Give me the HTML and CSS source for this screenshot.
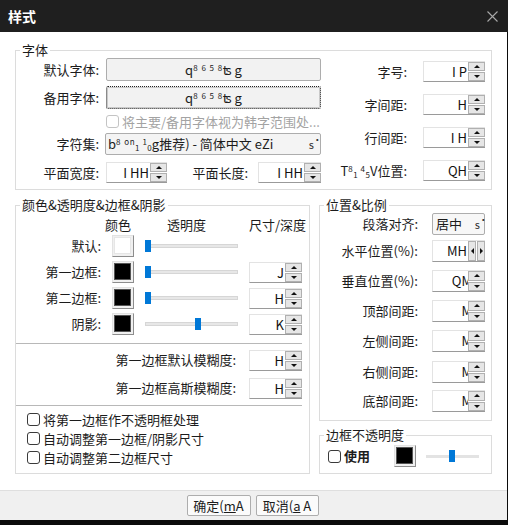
FILE: index.html
```html
<!DOCTYPE html>
<html lang="zh-CN">
<head>
<meta charset="utf-8">
<title>样式</title>
<link rel="stylesheet" href="styles.css">
</head>
<body>
<div class="window">
  <div class="titlebar">
    <span class="title">样式</span>
    <svg class="close" width="11" height="11" viewBox="0 0 11 11"><path d="M0.5 0.5 L10.5 10.5 M10.5 0.5 L0.5 10.5" stroke="#a8a8a8" stroke-width="1.1" fill="none"/></svg>
  </div>
  <div class="content">
    <fieldset class="group font-group">
      <legend>字体</legend>
      <div class="font-body">
        <div class="font-left">
          <div class="frow r1"><span class="lbl">默认字体:</span><button class="fontbtn">q<span class="sup">8 6 5 8</span><span class="ts">ts</span> g</button></div>
          <div class="frow r2"><span class="lbl">备用字体:</span><button class="fontbtn focused">q<span class="sup">8 6 5 8</span><span class="ts">ts</span> g</button></div>
          <div class="frow r3"><span class="lbl"></span><label class="chk disabled"><span class="box"></span>将主要/备用字体视为韩字范围处...</label></div>
          <div class="frow r4"><span class="lbl">字符集:</span><div class="combo charset"><span class="ctext">b<span class="sup">8 on</span><span class="sub">1</span> <span class="sup">1</span><span class="sub">0</span>g推荐) - 简体中文 eZi</span><span class="arrow">ṡ</span></div></div>
          <div class="frow r5"><span class="lbl">平面宽度:</span>
            <div class="sizes">
              <div class="spin w61"><span class="val">I HH</span><span class="btns"><i class="up"></i><i class="dn"></i></span></div>
              <span class="lbl2">平面长度:</span>
              <div class="spin w63"><span class="val">I HH</span><span class="btns"><i class="up"></i><i class="dn"></i></span></div>
            </div>
          </div>
        </div>
        <div class="font-right">
          <div class="prow"><span class="plbl">字号:</span><div class="spin w62"><span class="val">I P</span><span class="btns"><i class="up"></i><i class="dn"></i></span></div></div>
          <div class="prow"><span class="plbl">字间距:</span><div class="spin w62"><span class="val">H</span><span class="btns"><i class="up"></i><i class="dn"></i></span></div></div>
          <div class="prow"><span class="plbl">行间距:</span><div class="spin w62"><span class="val">I H</span><span class="btns"><i class="up"></i><i class="dn"></i></span></div></div>
          <div class="prow"><span class="plbl">T<span class="sup">8</span><span class="sub">1</span> <span class="sup">4</span><span class="sub">5</span>V位置:</span><div class="spin w62"><span class="val">QH</span><span class="btns"><i class="up"></i><i class="dn"></i></span></div></div>
        </div>
      </div>
    </fieldset>

    <div class="lower">
      <fieldset class="group colors">
        <legend>颜色&amp;透明度&amp;边框&amp;阴影</legend>
        <div class="colors-body">
          <div class="cgrid">
            <span></span><span class="hdr hdr-c">颜色</span><span class="hdr hdr-a">透明度</span><span class="hdr">尺寸/深度</span>

            <span class="clbl">默认:</span>
            <span class="swatch"><span class="fill white"></span></span>
            <span class="slider"><span class="track"></span><span class="thumb" style="left:0px"></span></span>
            <span></span>

            <span class="clbl">第一边框:</span>
            <span class="swatch"><span class="fill"></span></span>
            <span class="slider"><span class="track"></span><span class="thumb" style="left:0px"></span></span>
            <div class="spin"><span class="val">J</span><span class="btns"><i class="up"></i><i class="dn"></i></span></div>

            <span class="clbl">第二边框:</span>
            <span class="swatch"><span class="fill"></span></span>
            <span class="slider"><span class="track"></span><span class="thumb" style="left:0px"></span></span>
            <div class="spin"><span class="val">H</span><span class="btns"><i class="up"></i><i class="dn"></i></span></div>

            <span class="clbl">阴影:</span>
            <span class="swatch"><span class="fill"></span></span>
            <span class="slider"><span class="track"></span><span class="thumb" style="left:50px"></span></span>
            <div class="spin"><span class="val">K</span><span class="btns"><i class="up"></i><i class="dn"></i></span></div>
          </div>
          <div class="sep sep1"></div>
          <div class="blur">
            <span class="blbl">第一边框默认模糊度:</span>
            <div class="spin"><span class="val">H</span><span class="btns"><i class="up"></i><i class="dn"></i></span></div>
            <span class="blbl">第一边框高斯模糊度:</span>
            <div class="spin"><span class="val">H</span><span class="btns"><i class="up"></i><i class="dn"></i></span></div>
          </div>
          <div class="sep sep2"></div>
          <div class="checks">
            <label class="chk"><span class="box"></span>将第一边框作不透明框处理</label>
            <label class="chk"><span class="box"></span>自动调整第一边框/阴影尺寸</label>
            <label class="chk"><span class="box"></span>自动调整第二边框尺寸</label>
          </div>
        </div>
      </fieldset>

      <div class="right-col">
        <fieldset class="group position">
          <legend>位置&amp;比例</legend>
          <div class="pos-body">
            <div class="qrow"><span class="qlbl">段落对齐:</span><div class="combo align"><span class="ctext">居中</span><span class="arrow">ṡ</span></div></div>
            <div class="qrow g5"><span class="qlbl">水平位置(%):</span><div class="spin"><span class="val">MH</span><span class="btns horiz"><i class="lt"></i><i class="rt"></i></span></div></div>
            <div class="qrow g8"><span class="qlbl">垂直位置(%):</span><div class="spin"><span class="val clip">QM</span><span class="btns"><i class="up"></i><i class="dn"></i></span></div></div>
            <div class="qrow g8"><span class="qlbl">顶部间距:</span><div class="spin"><span class="val clip">M</span><span class="btns"><i class="up"></i><i class="dn"></i></span></div></div>
            <div class="qrow g8"><span class="qlbl">左侧间距:</span><div class="spin"><span class="val clip">M</span><span class="btns"><i class="up"></i><i class="dn"></i></span></div></div>
            <div class="qrow g9"><span class="qlbl">右侧间距:</span><div class="spin"><span class="val clip">M</span><span class="btns"><i class="up"></i><i class="dn"></i></span></div></div>
            <div class="qrow g7"><span class="qlbl">底部间距:</span><div class="spin"><span class="val clip">M</span><span class="btns"><i class="up"></i><i class="dn"></i></span></div></div>
          </div>
        </fieldset>
        <fieldset class="group opacity">
          <legend>边框不透明度</legend>
          <div class="op-body">
            <label class="chk bold"><span class="box"></span>使用</label>
            <span class="swatch"><span class="fill"></span></span>
            <span class="slider small"><span class="track"></span><span class="thumb" style="left:23px"></span></span>
          </div>
        </fieldset>
      </div>
    </div>
  </div>
  <div class="footer">
    <button class="btn ok">确定(<u>m</u>A</button>
    <button class="btn cancel">取消(<u>a</u> A</button>
  </div>
</div>
</body>
</html>
```

FILE: styles.css
```css
* { box-sizing: border-box; }
html, body { margin: 0; padding: 0; }
body {
  width: 508px;
  height: 525px;
  overflow: hidden;
  background: #0b0b0b;
  font-family: "Noto Sans CJK SC", "Noto Sans", sans-serif;
  font-size: 13px;
  line-height: 16px;
  color: #1c1c1c;
}
.window { width: 508px; }

.titlebar {
  height: 32px;
  background: #1f1f1f;
  display: flex;
  align-items: center;
  justify-content: space-between;
  padding: 0 10px 0 8px;
  color: #fff;
}
.title { font-size: 14px; font-weight: bold; line-height: 16px; }
.close { display: block; }

.content {
  width: 507px;
  height: 458px;
  background: #fff;
  padding: 10px 0 0 15px;
}

.group {
  border: 1px solid #dcdcdc;
  margin: 0;
  padding: 0;
  min-width: 0;
}
.group > legend {
  padding: 0 2px;
  margin-left: 4px;
  font-size: 13px;
  line-height: 16px;
  color: #1c1c1c;
}

.sup { font-size: 8px; vertical-align: 4px; line-height: 0; letter-spacing: 0.5px; word-spacing: 1px; }
.sub { font-size: 8px; vertical-align: -2px; line-height: 0; }
.ts { letter-spacing: -2px; margin-right: 2px; }

/* ---------- font group ---------- */
.font-group { width: 477px; }
.font-body {
  display: flex;
  justify-content: space-between;
  padding: 0 6px 6px 0;
}
.font-left { width: 305px; display: flex; flex-direction: column; }
.frow { display: flex; align-items: center; }
.frow .lbl { width: 83px; margin-right: 7px; text-align: right; flex: none; }
.r1 { height: 23px; }
.r2 { height: 23px; margin-top: 5px; }
.r3 { height: 19px; margin-top: 3px; }
.r4 { height: 22px; margin-top: 2px; }
.r5 { height: 21px; margin-top: 7px; }

.fontbtn {
  width: 215px;
  height: 23px;
  margin: 0;
  padding: 0;
  font: inherit;
  color: #1c1c1c;
  background: #f2f2f2;
  border: 1px solid #adadad;
  border-radius: 2px;
}
.fontbtn.focused {
  border: 1px dotted #222;
  box-shadow: inset 0 0 0 1px #c9c9c9;
}

.chk { display: flex; align-items: center; white-space: nowrap; }
.chk .box {
  width: 13px;
  height: 13px;
  border: 1px solid #3a3a3a;
  border-radius: 3px;
  background: #fff;
  margin-right: 3px;
  flex: none;
}
.chk.disabled { color: #a3a3a3; }
.chk.disabled .box { border-color: #c4c4c4; }

.combo {
  display: flex;
  align-items: center;
  justify-content: space-between;
  height: 22px;
  background: #f4f4f4;
  border: 1px solid #adadad;
  border-radius: 2px;
  padding: 0 6px 0 2px;
  white-space: nowrap;
}
.combo.charset { width: 216px; margin-left: -1px; }
.combo .arrow { font-size: 11px; color: #333; }

.sizes { display: flex; align-items: center; width: 215px; }
.lbl2 { flex: 1; text-align: right; padding-right: 10px; }

.spin {
  display: flex;
  height: 21px;
  width: 53px;
  background: #fff;
  border: 1px solid #e3e3e3;
  border-bottom-color: #9a9a9a;
  border-right: none;
}
.spin.w61 { width: 61px; }
.spin.w62 { width: 62px; }
.spin.w63 { width: 63px; }
.spin .val {
  flex: 1;
  text-align: right;
  line-height: 19px;
  padding-right: 1px;
  overflow: hidden;
  white-space: nowrap;
  color: #111;
}
.spin .val.clip { padding-right: 0; margin-right: -4px; position: relative; z-index: 0; }
.spin .btns {
  width: 17px;
  display: flex;
  flex-direction: column;
  gap: 1px;
  position: relative;
  z-index: 1;
  background: #fff;
}
.spin .btns i {
  flex: 1;
  display: flex;
  align-items: center;
  justify-content: center;
  background: #e6e6e6;
  border: 1px solid #b0b0b0;
}
.spin .btns i::after {
  content: "";
  border-left: 3px solid transparent;
  border-right: 3px solid transparent;
}
.spin .btns i.up::after { border-bottom: 3px solid #111; }
.spin .btns i.dn::after { border-top: 3px solid #111; }
.spin .btns.horiz { flex-direction: row; width: 17px; }
.spin .btns.horiz i::after {
  border-left: none;
  border-right: none;
  border-top: 3px solid transparent;
  border-bottom: 3px solid transparent;
}
.spin .btns.horiz i.lt::after { border-right: 3px solid #111; }
.spin .btns.horiz i.rt::after { border-left: 3px solid #111; }

.font-right {
  display: flex;
  flex-direction: column;
  gap: 12px;
  padding-top: 3px;
}
.prow { display: flex; align-items: center; justify-content: flex-end; }
.plbl { margin-right: 16px; white-space: nowrap; }

/* ---------- lower ---------- */
.lower { display: flex; gap: 9px; margin-top: 7px; }
.colors { width: 295px; }
.colors-body { padding: 0 7px 5px 0; }

.cgrid {
  display: grid;
  grid-template-columns: 85px 22px 93px 53px;
  grid-template-rows: 18px 22px 22px 22px 22px;
  column-gap: 11px;
  row-gap: 4px;
  align-items: center;
}
.hdr { text-align: center; white-space: nowrap; align-self: end; margin-bottom: -2px; }
.hdr-c { margin-left: -14px; margin-right: -4px; }
.hdr-a { margin-right: 10px; }
.clbl { text-align: right; white-space: nowrap; }

.swatch {
  width: 22px;
  height: 22px;
  display: block;
  background: #f0f0f0;
  border: 1px solid;
  border-color: #e2e2e2 #8d8d8d #8d8d8d #e2e2e2;
  padding: 1px 2px 2px 1px;
}
.swatch .fill {
  display: block;
  width: 100%;
  height: 100%;
  background: #000;
  border: 1px solid #555;
}
.swatch .fill.white { background: #fff; border-color: #e6e6e6; }

.slider { position: relative; height: 12px; display: block; }
.slider .track {
  position: absolute;
  left: 0;
  right: 0;
  top: 4px;
  height: 4px;
  background: #e7e7e7;
  border: 1px solid #d6d6d6;
}
.slider .thumb {
  position: absolute;
  top: 0;
  width: 6px;
  height: 12px;
  background: #0078d7;
}

.sep { height: 1px; background: #b8b8b8; }
.sep1 { margin: 8px 0 5px; }
.sep2 { margin: 6px 0 4px; }

.blur {
  display: grid;
  grid-template-columns: 1fr 53px;
  grid-template-rows: 22px 22px;
  column-gap: 13px;
  row-gap: 6px;
  align-items: center;
}
.blbl { text-align: right; white-space: nowrap; }

.checks { padding-left: 11px; display: flex; flex-direction: column; }
.checks .chk { height: 19px; }

.right-col { width: 173px; display: flex; flex-direction: column; gap: 6px; }
.position { width: 173px; }
.pos-body { padding: 0 6px 8px 0; display: flex; flex-direction: column; }
.qrow { display: flex; align-items: center; height: 22px; }
.qrow.g5 { margin-top: 5px; }
.qrow.g7 { margin-top: 7px; }
.qrow.g8 { margin-top: 8px; }
.qrow.g9 { margin-top: 9px; }
.qlbl { flex: 1; text-align: right; padding-right: 14px; white-space: nowrap; }
.combo.align { width: 53px; padding: 0 4px 0 3px; background: #f7f7f7; }
.qrow .spin { height: 22px; }

.opacity { width: 173px; }
.op-body { display: flex; align-items: center; padding: 2px 0 6px 8px; }
.chk.bold { font-weight: bold; width: 66px; }
.slider.small { width: 53px; margin-left: 10px; }
.slider.small .track { top: 5px; height: 3px; border: none; background: #e3e3e3; }

/* ---------- footer ---------- */
.footer {
  width: 507px;
  height: 30px;
  background: #f0f0f0;
  border-top: 1px solid #dfdfdf;
  display: flex;
  justify-content: center;
  align-items: center;
  gap: 5px;
  padding-right: 2px;
}
.btn {
  height: 21px;
  margin: 0;
  padding: 0;
  font: inherit;
  color: #1c1c1c;
  background: #fbfbfb;
  border: 1px solid #adadad;
  border-radius: 2px;
}
.btn.ok { width: 64px; }
.btn.cancel { width: 63px; }
```
